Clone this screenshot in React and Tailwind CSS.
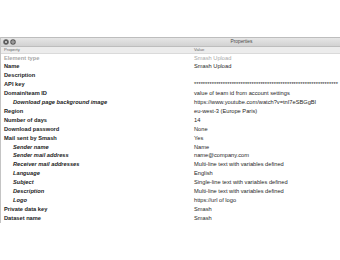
import React from "react";

const ROWS = [
  { label: "Element type", value: "Smash Upload", disabled: true },
  { label: "Name", value: "Smash Upload" },
  { label: "Description", value: "" },
  { label: "API key", value: "*".repeat(65) },
  { label: "Domain/team ID", value: "value of team id from account settings" },
  { label: "Download page background image", value: "https://www.youtube.com/watch?v=tnI7eSBGgBI", sub: true },
  { label: "Region", value: "eu-west-3 (Europe Paris)" },
  { label: "Number of days", value: "14" },
  { label: "Download password", value: "None" },
  { label: "Mail sent by Smash", value: "Yes" },
  { label: "Sender name", value: "Name", sub: true },
  { label: "Sender mail address", value: "name@company.com", sub: true },
  { label: "Receiver mail addresses", value: "Multi-line text with variables defined", sub: true },
  { label: "Language", value: "English", sub: true },
  { label: "Subject", value: "Single-line text with variables defined", sub: true },
  { label: "Description", value: "Multi-line text with variables defined", sub: true },
  { label: "Logo", value: "https://url of logo", sub: true },
  { label: "Private data key", value: "Smash" },
  { label: "Dataset name", value: "Smash" },
];

function WindowButton({ kind }) {
  return (
    <svg width="6" height="6" viewBox="0 0 12 12" className="shrink-0">
      <circle cx="6" cy="6" r="5.5" fill="#5a5a5a" />
      {kind === "close" ? (
        <path d="M3.8 3.8 8.2 8.2 M8.2 3.8 3.8 8.2" stroke="#d8d8d8" strokeWidth="1.6" />
      ) : (
        <circle cx="6" cy="6" r="2.4" fill="none" stroke="#d8d8d8" strokeWidth="1.4" />
      )}
    </svg>
  );
}

export default function App() {
  return (
    <div className="w-[340px] h-[260px] overflow-hidden bg-white" style={{ fontFamily: '"Liberation Sans", Arial, sans-serif' }}>
      <div className="h-[37px]" />
      <div className="w-[482px] border-l border-[#c4c4c4]">
        {/* title bar */}
        <div className="relative h-[10px] flex items-center gap-[1.5px] pl-[1.5px] border-t border-[#b4b4b4] bg-gradient-to-b from-[#e6e6e6] to-[#d2d2d2] border-b border-[#bdbdbd]">
          <WindowButton kind="close" />
          <WindowButton kind="min" />
          <span className="absolute left-0 right-0 text-center text-[4.8px] leading-none text-[#4a4a4a]">Properties</span>
        </div>

        {/* header */}
        <div className="flex h-[7px] items-center bg-[#ececec] border-b border-[#dadada] text-[4.2px] text-[#6a6a6a]">
          <div className="w-[193px] pl-[3px]">Property</div>
          <div>Value</div>
        </div>

        {ROWS.map((row, i) => (
          <div key={i} className="flex h-[8.9px] items-center text-[5.7px] leading-none whitespace-nowrap">
            <div
              className={`w-[193px] shrink-0 font-bold ${row.sub ? "pl-[12px] italic" : "pl-[3px]"} ${row.disabled ? "text-[#a8a8a8]" : "text-[#1c1c1c]"}`}
            >
              {row.label}
            </div>
            <div className={row.disabled ? "text-[#a8a8a8]" : "text-[#262626]"}>{row.value}</div>
          </div>
        ))}
      </div>
    </div>
  );
}
